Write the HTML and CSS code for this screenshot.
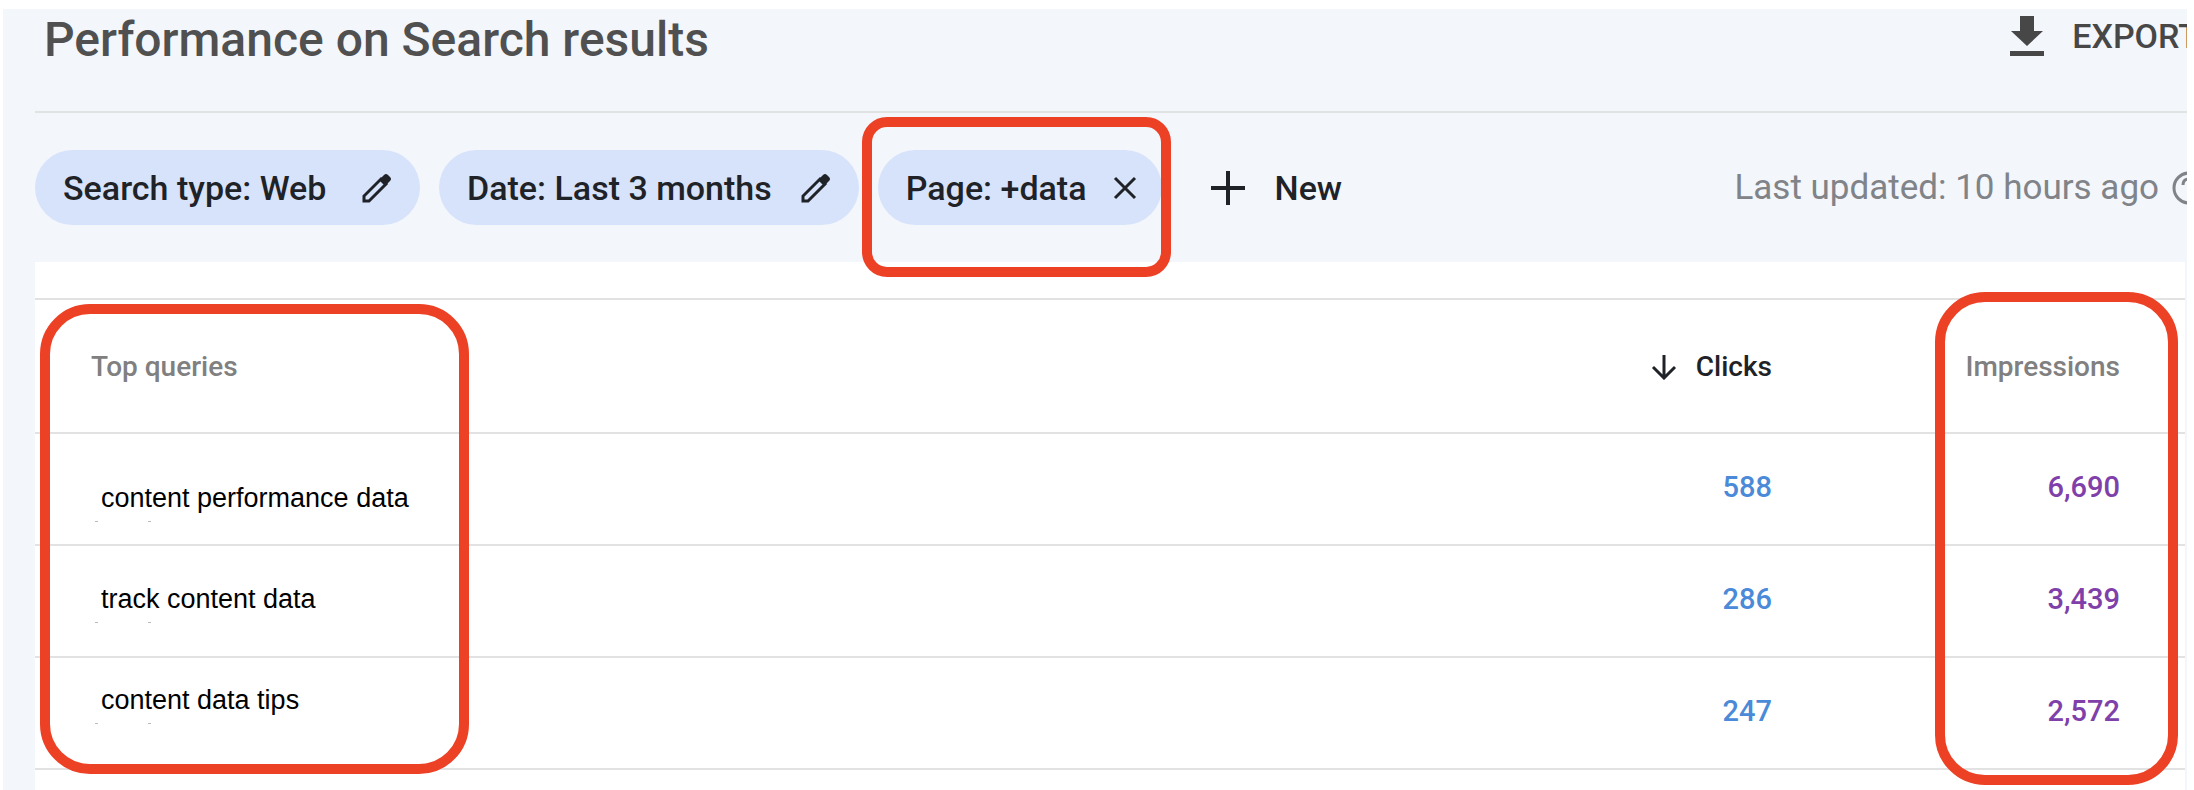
FILE: index.html
```html
<!DOCTYPE html>
<html lang="en">
<head>
    <meta charset="UTF-8">
    <meta name="viewport" content="width=device-width, initial-scale=1.0">
    <title>Performance on Search results</title>
    <link rel="stylesheet" href="styles.css">
</head>
<body>
<main class="panel">
    <header class="header">
        <h1>Performance on Search results</h1>
        <button type="button" class="export">
            <svg width="34" height="40" viewBox="0 0 34 40" aria-hidden="true">
                <path d="M10 0h14v15h9L17 30 1 15h9zM0 35h34v5H0z" fill="currentColor"/>
            </svg>
            EXPORT
        </button>
    </header>

    <div class="filters">
        <button type="button" class="chip chip-type">
            Search type: Web
            <svg width="30" height="30" viewBox="0 0 30 30" aria-hidden="true">
                <path d="M2 28v-5L19 6l5 5L7 28z" fill="none" stroke="currentColor" stroke-width="3"/>
                <path d="M17 7l5-5q2-2 4 0l2 2q2 2 0 4l-5 5z" fill="currentColor"/>
            </svg>
        </button>
        <button type="button" class="chip">
            Date: Last 3 months
            <svg width="30" height="30" viewBox="0 0 30 30" aria-hidden="true">
                <path d="M2 28v-5L19 6l5 5L7 28z" fill="none" stroke="currentColor" stroke-width="3"/>
                <path d="M17 7l5-5q2-2 4 0l2 2q2 2 0 4l-5 5z" fill="currentColor"/>
            </svg>
        </button>
        <div class="marked">
            <button type="button" class="chip chip-close">
                Page: +data
                <svg width="24" height="24" viewBox="0 0 24 24" aria-hidden="true">
                    <path d="M2 2l20 20M22 2L2 22" fill="none" stroke="currentColor" stroke-width="3"/>
                </svg>
            </button>
            <span class="highlight highlight-chip"></span>
        </div>
        <button type="button" class="new">
            <svg width="34" height="34" viewBox="0 0 34 34" aria-hidden="true">
                <path d="M17 0v34M0 17h34" fill="none" stroke="currentColor" stroke-width="4"/>
            </svg>
            New
        </button>
        <div class="updated">
            Last updated: 10 hours ago
            <svg width="34" height="34" viewBox="0 0 34 34" aria-hidden="true">
                <circle cx="17" cy="17" r="15" fill="none" stroke="currentColor" stroke-width="3"/>
                <path d="M11 14q0-6 6-6t6 6c0 4-6 4-6 8M17 24v3" fill="none" stroke="currentColor" stroke-width="3"/>
            </svg>
        </div>
    </div>

    <section class="card">
        <div class="table-wrap">
            <table>
                <thead>
                    <tr>
                        <th>Top queries</th>
                        <th class="num sorted">
                            <svg width="26" height="26" viewBox="0 0 26 26" aria-hidden="true">
                                <path d="M13 1v22M2 13l11 11 11-11" fill="none" stroke="currentColor" stroke-width="3"/>
                            </svg>
                            Clicks
                        </th>
                        <th class="num">Impressions</th>
                    </tr>
                </thead>
                <tbody>
                    <tr>
                        <td class="query low"><span>content performance data</span></td>
                        <td class="num clicks">588</td>
                        <td class="num impressions">6,690</td>
                    </tr>
                    <tr>
                        <td class="query"><span>track content data</span></td>
                        <td class="num clicks">286</td>
                        <td class="num impressions">3,439</td>
                    </tr>
                    <tr>
                        <td class="query high"><span>content data tips</span></td>
                        <td class="num clicks">247</td>
                        <td class="num impressions">2,572</td>
                    </tr>
                </tbody>
            </table>
            <span class="highlight highlight-queries"></span>
            <span class="highlight highlight-impressions"></span>
        </div>
    </section>
</main>
</body>
</html>
```

FILE: styles.css
```css
* {
    box-sizing: border-box;
}
body {
    margin: 0;
    padding: 9px 7px 0 3px;
    background-color: #fff;
    font-family: Roboto, Arial, sans-serif;
    overflow: hidden;
}
button {
    border: none;
    padding: 0;
    background: none;
    font-family: inherit;
    cursor: pointer;
}
svg {
    flex: none;
}
.panel {
    display: flex;
    flex-direction: column;
    min-height: calc(100vh - 9px);
    padding: 0 2px 0 32px;
    background-color: #f3f6fb;
    overflow: hidden;
}
.header {
    display: flex;
    justify-content: space-between;
    height: 104px;
    margin-right: -2px;
    border-bottom: 2px solid #e0e3e1;
}
h1 {
    margin: 0;
    padding-left: 9px;
    font-size: 48px;
    font-weight: 500;
    line-height: 62px;
    color: #505050;
    white-space: nowrap;
}
.export {
    display: flex;
    align-items: center;
    gap: 28px;
    height: 54px;
    margin-right: -12px;
    font-size: 34px;
    font-weight: 500;
    color: #474747;
}
.filters {
    display: flex;
    align-items: center;
    height: 149px;
    gap: 19px;
}
.chip {
    display: flex;
    align-items: center;
    justify-content: space-between;
    gap: 29px;
    height: 75px;
    padding: 0 28px;
    border-radius: 38px;
    background-color: #d7e3fb;
    font-size: 34px;
    font-weight: 500;
    color: #1f2328;
    white-space: nowrap;
}
.chip-type {
    min-width: 385px;
}
.chip-close {
    gap: 26px;
    padding-right: 25px;
}
.marked {
    position: relative;
}
.new {
    display: flex;
    align-items: center;
    gap: 30px;
    margin-left: 30px;
    font-size: 34px;
    font-weight: 500;
    color: #1f2328;
}
.updated {
    display: flex;
    align-items: center;
    gap: 13px;
    margin-left: auto;
    margin-right: -21px;
    font-size: 35px;
    color: #808388;
    white-space: nowrap;
}
.card {
    flex: 1;
    padding-top: 36px;
    background-color: #fff;
}
.table-wrap {
    position: relative;
}
table {
    width: 100%;
    table-layout: fixed;
    border-collapse: separate;
    border-spacing: 0;
    border-top: 2px solid #e2e2e2;
}
th, td {
    height: 112px;
    padding: 0 65px 4px 56px;
    border-bottom: 2px solid #e2e2e2;
    text-align: left;
    font-size: 29px;
    font-weight: 500;
}
th {
    height: 134px;
    padding-bottom: 0;
    font-size: 28px;
    color: #808080;
}
.num {
    width: 348px;
    padding-left: 0;
    text-align: right;
}
.sorted {
    color: #1f2328;
}
.sorted svg {
    margin-right: 12px;
    vertical-align: -4px;
}
.clicks {
    color: #4a8ad8;
}
.impressions {
    color: #8040aa;
}
.query {
    padding: 26px 66px 30px;
    font-family: "Liberation Sans", Arial, sans-serif;
    font-size: 27px;
    font-weight: 400;
    line-height: 32px;
    color: #000;
}
.low {
    vertical-align: bottom;
}
.high {
    vertical-align: top;
}
.query span {
    position: relative;
}
/* faint tick marks under each query */
.query span::after {
    content: "";
    position: absolute;
    left: -6px;
    bottom: -9px;
    width: 3px;
    height: 1px;
    background-color: #bbb;
    box-shadow: 53px 0 #bbb;
}
.highlight {
    position: absolute;
    border: 10px solid #ec4125;
    border-radius: 50px;
    pointer-events: none;
}
.highlight-chip {
    inset: -33px -9px -52px -16px;
    border-radius: 25px;
}
.highlight-queries {
    top: 6px;
    left: 5px;
    width: 429px;
    height: 470px;
}
.highlight-impressions {
    top: -6px;
    right: 7px;
    width: 243px;
    height: 493px;
}
```
